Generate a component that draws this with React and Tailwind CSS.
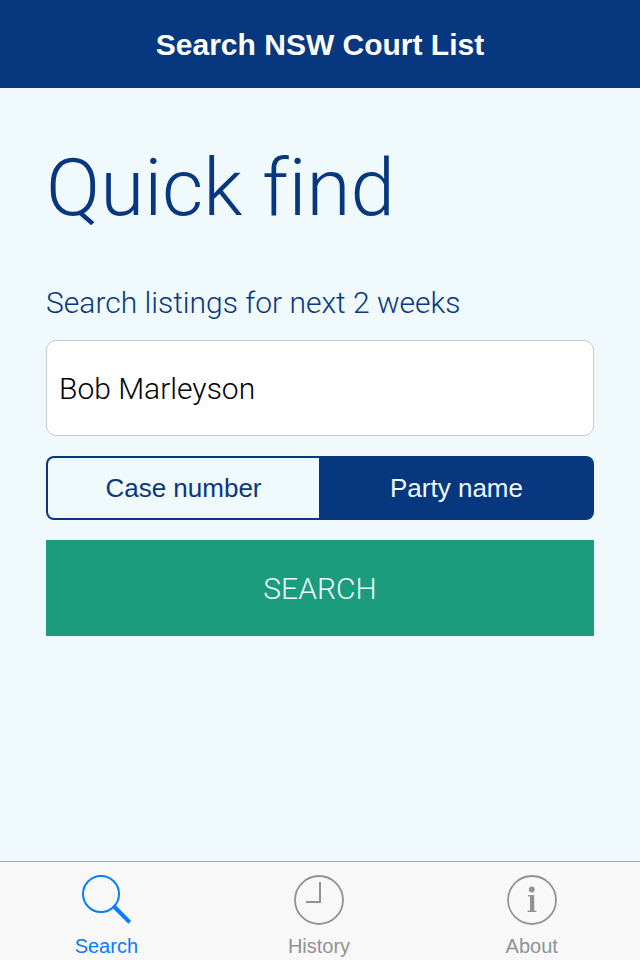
import { useState } from "react";

const SEARCH_MODES = [
  { id: "case", label: "Case number" },
  { id: "party", label: "Party name" },
];

const TABS = [
  { id: "search", label: "Search", icon: SearchIcon },
  { id: "history", label: "History", icon: HistoryIcon },
  { id: "about", label: "About", icon: AboutIcon },
];

function SearchIcon() {
  return (
    <svg className="h-[50px] w-[50px]" viewBox="0 0 50 50" fill="none" stroke="currentColor" aria-hidden="true">
      <circle cx="20" cy="19" r="18" strokeWidth="2" />
      <path d="M32 31 L34 33" strokeWidth="2.5" />
      <path d="M33.5 32 L48.8 47.3" strokeWidth="4" />
    </svg>
  );
}

function HistoryIcon() {
  return (
    <svg className="h-[50px] w-[50px]" viewBox="0 0 50 50" fill="none" stroke="currentColor" aria-hidden="true">
      <circle cx="25" cy="25" r="24" strokeWidth="1.8" />
      <path d="M26 7 V27 H12" strokeWidth="2" />
    </svg>
  );
}

function AboutIcon() {
  return (
    <svg className="h-[50px] w-[50px]" viewBox="0 0 50 50" aria-hidden="true">
      <circle cx="25" cy="25" r="24" fill="none" stroke="currentColor" strokeWidth="1.8" />
      <g fill="currentColor">
        <circle cx="24.8" cy="14.5" r="2.9" />
        <rect x="21" y="20" width="6" height="1.4" />
        <rect x="23" y="20" width="4.2" height="17" />
        <rect x="20.5" y="35.6" width="9" height="1.4" />
      </g>
    </svg>
  );
}

export default function App() {
  const [query, setQuery] = useState("Bob Marleyson");
  const [mode, setMode] = useState("party");
  const [activeTab, setActiveTab] = useState("search");

  return (
    <div className="flex min-h-screen flex-col bg-[#f0f9fc] font-['Liberation_Sans',sans-serif]">
      <header className="flex h-[88px] items-center justify-center bg-[#07387f]">
        <h1 className="text-[30px] font-bold text-white">Search NSW Court List</h1>
      </header>

      <main className="flex-1 px-[46px] pt-12">
        <h2 className="font-['Roboto',sans-serif] text-[80px] leading-[104px] font-light text-[#07387f] [font-variant-ligatures:none]">
          Quick find
        </h2>

        <form className="mt-[43px] flex flex-col gap-5" onSubmit={(e) => e.preventDefault()}>
          <div className="flex flex-col font-['Roboto',sans-serif] font-light">
            <label htmlFor="query" className="mb-[17px] text-[30px] leading-10 text-[#07387f]">
              Search listings for next 2 weeks
            </label>
            <input
              id="query"
              type="text"
              value={query}
              onChange={(e) => setQuery(e.target.value)}
              className="h-24 w-full rounded-[10px] border border-[#c3c9cc] bg-white px-3 text-[30px] text-black outline-none"
            />
          </div>

          <div className="flex h-16 gap-0.5 rounded-lg bg-[#07387f] p-0.5">
            {SEARCH_MODES.map((item) => (
              <button
                key={item.id}
                type="button"
                aria-pressed={mode === item.id}
                onClick={() => setMode(item.id)}
                className={[
                  "flex-1 text-[26px] first:rounded-l-md last:rounded-r-md",
                  mode === item.id ? "bg-[#07387f] text-[#f0f9fc]" : "bg-[#f0f9fc] text-[#07387f]",
                ].join(" ")}
              >
                {item.label}
              </button>
            ))}
          </div>

          <button
            type="submit"
            className="h-24 w-full bg-[#1b9c7c] font-['Roboto',sans-serif] text-[30px] font-light text-[#f0f9fc]"
          >
            SEARCH
          </button>
        </form>
      </main>

      <nav className="flex border-t border-[#a5adb0] bg-[#f8f8f8] pr-0.5">
        {TABS.map((tab) => {
          const Icon = tab.icon;
          return (
            <button
              key={tab.id}
              type="button"
              onClick={() => setActiveTab(tab.id)}
              className={[
                "flex flex-1 flex-col items-center gap-[9px] pt-[13px] pb-0.5",
                activeTab === tab.id ? "text-[#0a7aff]" : "text-[#929292]",
              ].join(" ")}
            >
              <Icon />
              <span className="text-[20px] leading-6">{tab.label}</span>
            </button>
          );
        })}
      </nav>
    </div>
  );
}
